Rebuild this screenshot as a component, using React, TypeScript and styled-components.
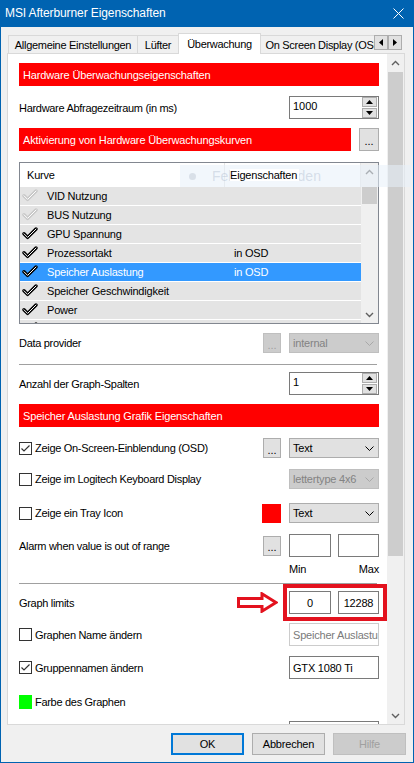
import React from "react";
import styled, { createGlobalStyle } from "styled-components";

const GlobalStyle = createGlobalStyle`
  html, body { margin: 0; padding: 0; }
  body {
    background: #f0f0f0;
    font-family: "Liberation Sans", Arial, sans-serif;
    font-size: 11px;
    color: #000;
    overflow: hidden;
  }
  #root { width: 414px; height: 763px; }
  *, *::before, *::after { box-sizing: border-box; }
`;

/* ---------- window frame ---------- */

const Window = styled.div`
  position: relative;
  width: 414px;
  height: 763px;
  display: flex;
  flex-direction: column;
  background: #f0f0f0;
  border: 1px solid #0063b1;
  border-top: 0;
  overflow: hidden;
`;

const TitleBar = styled.div`
  flex: none;
  height: 27px;
  display: flex;
  align-items: center;
  justify-content: space-between;
  padding: 0 0 1px 4px;
  background: #0063b1;
  color: #fff;
  font-size: 12px;
  letter-spacing: -0.1px;
`;

const CloseButton = styled.div`
  width: 30px;
  height: 26px;
  display: flex;
  align-items: center;
  justify-content: center;
`;

const DialogBody = styled.div`
  flex: 1;
  display: flex;
  flex-direction: column;
  padding: 6px 8px 0 6px;
`;

/* ---------- tabs ---------- */

const TabStrip = styled.div`
  flex: none;
  height: 21px;
  display: flex;
  align-items: flex-end;
  padding-left: 1px;
  box-shadow: inset 0 -1px 0 #d9d9d9;
`;

const TabRow = styled.div`
  flex: 1;
  min-width: 0;
  height: 100%;
  display: flex;
  align-items: flex-end;
  overflow: hidden;
`;

const Tab = styled.div<{ $w: number; $active?: boolean }>`
  flex: none;
  position: relative;
  z-index: ${(p) => (p.$active ? 1 : 0)};
  width: ${(p) => p.$w}px;
  height: ${(p) => (p.$active ? 21 : 18)}px;
  margin-bottom: ${(p) => (p.$active ? 0 : 1)}px;
  margin-right: -1px;
  display: flex;
  align-items: center;
  justify-content: center;
  border: 1px solid #d9d9d9;
  border-bottom: 0;
  background: ${(p) => (p.$active ? "#fff" : "#f0f0f0")};
  white-space: nowrap;
  letter-spacing: -0.3px;
`;

const TabScroller = styled.div`
  flex: none;
  align-self: flex-start;
  display: flex;
  margin: 2px 3px 0 0;
`;

const TabScrollButton = styled.div`
  width: 14px;
  height: 15px;
  display: flex;
  align-items: center;
  justify-content: center;
  background: #e1e1e1;
  border: 1px solid #adadad;
`;

/* ---------- page ---------- */

const Page = styled.div`
  flex: none;
  height: 671px;
  display: flex;
  background: #fff;
  border: 1px solid #d9d9d9;
  border-top: 0;
`;

const Scroller = styled.div`
  flex: 1;
  min-width: 0;
  overflow: hidden;
  display: flex;
  flex-direction: column;
  padding: 9px 8px 0 11px;
  & > * { flex: none; }
`;

const ScrollTrack = styled.div`
  flex: none;
  width: 17px;
  display: flex;
  flex-direction: column;
  background: #f0f0f0;
`;

const ScrollArrow = styled.div`
  flex: none;
  height: 17px;
  display: flex;
  align-items: center;
  justify-content: center;
`;

const ScrollSpace = styled.div`
  flex: 1;
  min-height: 0;
  display: flex;
  flex-direction: column;
`;

const ScrollThumb = styled.div<{ $mt: number; $h: number }>`
  flex: none;
  height: ${(p) => p.$h}px;
  margin: ${(p) => p.$mt}px 1px 0;
  background: #cdcdcd;
`;

const SectionBar = styled.div<{ $mt?: number }>`
  flex: 1 0 auto;
  height: 23px;
  margin-top: ${(p) => p.$mt ?? 0}px;
  display: flex;
  align-items: center;
  padding-left: 4px;
  background: #ff0000;
  color: #fff;
  white-space: nowrap;
  letter-spacing: -0.15px;
`;

const FormRow = styled.div<{ $mt: number; $h: number }>`
  position: relative;
  display: flex;
  align-items: center;
  gap: 8px;
  margin-top: ${(p) => p.$mt}px;
  height: ${(p) => p.$h}px;
`;

const Label = styled.div`
  flex: 1;
  min-width: 0;
  white-space: nowrap;
  letter-spacing: -0.3px;
`;

const CheckLabel = styled.div`
  flex: 1;
  min-width: 0;
  display: flex;
  align-items: center;
  gap: 3px;
  white-space: nowrap;
  letter-spacing: -0.3px;
`;

const CheckBox = styled.span`
  flex: none;
  width: 13px;
  height: 13px;
  display: inline-flex;
  align-items: center;
  justify-content: center;
  border: 1px solid #333;
  background: #fff;
`;

const Swatch = styled.span<{ $color: string; $w: number; $h: number }>`
  flex: none;
  width: ${(p) => p.$w}px;
  height: ${(p) => p.$h}px;
  background: ${(p) => p.$color};
`;

const Divider = styled.div<{ $mt: number }>`
  height: 1px;
  margin: ${(p) => p.$mt}px 2px 0 0;
  background: #a0a0a0;
`;

const DotsButton = styled.div<{ $disabled?: boolean; $w?: number; $h?: number }>`
  flex: none;
  width: ${(p) => p.$w ?? 18}px;
  height: ${(p) => p.$h ?? 20}px;
  display: flex;
  align-items: center;
  justify-content: center;
  padding-top: 3px;
  background: ${(p) => (p.$disabled ? "#cccccc" : "#e1e1e1")};
  border: 1px solid ${(p) => (p.$disabled ? "#bfbfbf" : "#adadad")};
  color: ${(p) => (p.$disabled ? "#a0a0a0" : "#000")};
`;

const Combo = styled.div<{ $disabled?: boolean }>`
  flex: none;
  width: 90px;
  height: 20px;
  display: flex;
  align-items: center;
  justify-content: space-between;
  padding: 0 4px 0 3px;
  background: ${(p) => (p.$disabled ? "#cccccc" : "#e1e1e1")};
  border: 1px solid ${(p) => (p.$disabled ? "#bfbfbf" : "#adadad")};
  color: ${(p) => (p.$disabled ? "#838383" : "#000")};
  white-space: nowrap;
  letter-spacing: -0.2px;
`;

const SpinBox = styled.div`
  flex: none;
  width: 90px;
  height: 23px;
  display: flex;
  border: 1px solid #7a7a7a;
  background: #fff;
`;

const SpinValue = styled.div`
  flex: 1;
  padding: 3px 0 0 3px;
`;

const SpinButtons = styled.div`
  flex: none;
  width: 16px;
  display: flex;
  flex-direction: column;
  gap: 1px;
  padding: 0 1px 0 0;
`;

const SpinButton = styled.div`
  flex: 1;
  display: flex;
  align-items: center;
  justify-content: center;
  background: #e1e1e1;
  border: 1px solid #adadad;
`;

const TextBox = styled.div<{ $w?: number; $center?: boolean; $disabled?: boolean }>`
  flex: none;
  width: ${(p) => p.$w ?? 90}px;
  height: 23px;
  display: flex;
  align-items: center;
  justify-content: ${(p) => (p.$center ? "center" : "flex-start")};
  padding: 0 3px;
  overflow: hidden;
  white-space: nowrap;
  background: #fff;
  border: 1px solid ${(p) => (p.$disabled ? "#cccccc" : "#7a7a7a")};
  color: ${(p) => (p.$disabled ? "#7a7a7a" : "#000")};
  letter-spacing: -0.2px;
`;

const Pair = styled.div`
  flex: none;
  display: flex;
  gap: 7px;
`;

const RangeCaption = styled.div<{ $mt: number }>`
  display: flex;
  justify-content: flex-end;
  margin-top: ${(p) => p.$mt}px;
  height: 12px;
`;

const RangeLabels = styled.div`
  width: 90px;
  display: flex;
  justify-content: space-between;
  align-items: center;
  letter-spacing: -0.2px;
`;

/* red mark-up drawn over the limits row */
const MarkFrame = styled.div`
  position: absolute;
  left: 264px;
  top: -7px;
  width: 104px;
  height: 37px;
  border: 4px solid #e3121e;
  pointer-events: none;
`;

const MarkArrow = styled.svg`
  position: absolute;
  left: 218px;
  top: 1px;
`;

/* ---------- curve list ---------- */

const ListBox = styled.div<{ $mt: number }>`
  height: 162px;
  margin-top: ${(p) => p.$mt}px;
  display: flex;
  border: 1px solid #828790;
  background: #fff;
`;

const ListBody = styled.div`
  flex: 1;
  min-width: 0;
  overflow: hidden;
  display: flex;
  flex-direction: column;
  & > * { flex: none; }
`;

const ListHeader = styled.div`
  height: 24px;
  display: grid;
  grid-template-columns: 205px 1fr;
  background: #fff;
`;

const HeaderCell = styled.div<{ $pl: number }>`
  display: flex;
  align-items: center;
  padding-left: ${(p) => p.$pl}px;
  border-right: 1px solid #e5e5e5;
  letter-spacing: -0.2px;
`;

const HeaderText = styled.span`
  position: relative;
  z-index: 2;
  background: #fff;
  padding-right: 2px;
`;

const ListRow = styled.div<{ $selected?: boolean }>`
  height: 19px;
  display: grid;
  grid-template-columns: 205px 1fr;
  align-items: center;
  border-bottom: 1px solid #fff;
  background: ${(p) => (p.$selected ? "#3399ff" : "#e4e4e4")};
  color: ${(p) => (p.$selected ? "#fff" : "#000")};
  white-space: nowrap;
  letter-spacing: -0.2px;
`;

const CurveCell = styled.div`
  display: flex;
  align-items: center;
  gap: 9px;
  padding-left: 2px;
  & > svg { margin-top: -2px; }
`;

const PropCell = styled.div`
  padding-left: 9px;
`;

/* ---------- bottom buttons ---------- */

const ButtonRow = styled.div`
  display: flex;
  justify-content: flex-end;
  gap: 8px;
  margin: 8px -1px 0 0;
`;

const DialogButton = styled.div<{ $variant?: "primary" | "disabled" }>`
  width: 73px;
  height: 22px;
  display: flex;
  align-items: center;
  justify-content: center;
  background: ${(p) => (p.$variant === "disabled" ? "#cccccc" : "#e1e1e1")};
  border: ${(p) =>
    p.$variant === "primary"
      ? "2px solid #0078d7"
      : p.$variant === "disabled"
      ? "1px solid #bfbfbf"
      : "1px solid #adadad"};
  color: ${(p) => (p.$variant === "disabled" ? "#a0a0a0" : "#000")};
  letter-spacing: -0.2px;
`;

/* faint notification toast floating over the list header */
const GhostToast = styled.div`
  position: absolute;
  left: 179px;
  top: 165px;
  width: 231px;
  height: 22px;
  z-index: 1;
  display: flex;
  align-items: center;
  gap: 16px;
  padding-left: 9px;
  background: rgba(232, 240, 250, 0.55);
  color: rgba(176, 190, 208, 0.45);
  font-size: 14px;
  white-space: nowrap;
  pointer-events: none;
`;

const GhostDot = styled.span`
  width: 7px;
  height: 7px;
  border-radius: 50%;
  background: rgba(200, 208, 218, 0.6);
`;

/* ---------- small drawings ---------- */

const Chevron = ({ dir, color = "#606060" }: { dir: "up" | "down"; color?: string }) => (
  <svg width="9" height="6" viewBox="0 0 9 6">
    <polyline
      points={dir === "up" ? "1,5 4.5,1.5 8,5" : "1,1 4.5,4.5 8,1"}
      fill="none"
      stroke={color}
      strokeWidth="1.4"
    />
  </svg>
);

const ComboArrow = ({ color = "#000" }: { color?: string }) => (
  <svg width="9" height="5" viewBox="0 0 9 5">
    <polyline points="0.5,0.5 4.5,4.5 8.5,0.5" fill="none" stroke={color} strokeWidth="1" />
  </svg>
);

const Triangle = ({ dir }: { dir: "up" | "down" | "left" | "right" }) => {
  const pts = {
    up: "0,4 3.5,0 7,4",
    down: "0,0 3.5,4 7,0",
    left: "4,0 4,7 0,3.5",
    right: "0,0 0,7 4,3.5",
  }[dir];
  const horizontal = dir === "left" || dir === "right";
  return (
    <svg width={horizontal ? 4 : 7} height={horizontal ? 7 : 4} viewBox={horizontal ? "0 0 4 7" : "0 0 7 4"}>
      <polygon points={pts} fill="#000" />
    </svg>
  );
};

const Tick = () => (
  <svg width="11" height="11" viewBox="0 0 11 11">
    <polyline points="1.5,5.5 4,8 9.5,2.5" fill="none" stroke="#333" strokeWidth="1.2" />
  </svg>
);

const CurveCheck = ({ off }: { off?: boolean }) => (
  <svg width="16" height="13" viewBox="0 0 16 13">
    <path
      d="M2 6.8 L5.6 10.4 L14 2"
      fill="none"
      stroke={off ? "#c8c8c8" : "#000"}
      strokeWidth="3.4"
      strokeLinecap="round"
      strokeLinejoin="round"
    />
    <path
      d="M2 6.8 L5.6 10.4 L14 2"
      fill="none"
      stroke="#fff"
      strokeWidth="1"
      strokeLinecap="round"
      strokeLinejoin="round"
    />
  </svg>
);

function ScrollBar({ thumbTop, thumbHeight }: { thumbTop: number; thumbHeight: number }) {
  return (
    <ScrollTrack>
      <ScrollArrow>
        <Chevron dir="up" />
      </ScrollArrow>
      <ScrollSpace>
        <ScrollThumb $mt={thumbTop} $h={thumbHeight} />
      </ScrollSpace>
      <ScrollArrow>
        <Chevron dir="down" />
      </ScrollArrow>
    </ScrollTrack>
  );
}

function Spinner({ value }: { value: string }) {
  return (
    <SpinBox>
      <SpinValue>{value}</SpinValue>
      <SpinButtons>
        <SpinButton>
          <Triangle dir="up" />
        </SpinButton>
        <SpinButton>
          <Triangle dir="down" />
        </SpinButton>
      </SpinButtons>
    </SpinBox>
  );
}

type Curve = { name: string; prop?: string; off?: boolean; selected?: boolean };

const curves: Curve[] = [
  { name: "VID Nutzung", off: true },
  { name: "BUS Nutzung", off: true },
  { name: "GPU Spannung" },
  { name: "Prozessortakt", prop: "in OSD" },
  { name: "Speicher Auslastung", prop: "in OSD", selected: true },
  { name: "Speicher Geschwindigkeit" },
  { name: "Power" },
  { name: "Lüftergeschwindigkeit" },
];

export default function App() {
  return (
    <>
      <GlobalStyle />
      <Window>
        <TitleBar>
          <span>MSI Afterburner Eigenschaften</span>
          <CloseButton>
            <svg width="11" height="11" viewBox="0 0 11 11">
              <path d="M0.5 0.5 L10.5 10.5 M10.5 0.5 L0.5 10.5" stroke="#fff" strokeWidth="1" />
            </svg>
          </CloseButton>
        </TitleBar>

        <DialogBody>
          <TabStrip>
            <TabRow>
              <Tab $w={130}>Allgemeine Einstellungen</Tab>
              <Tab $w={42}>Lüfter</Tab>
              <Tab $w={83} $active>
                Überwachung
              </Tab>
              <Tab $w={130}>On Screen Display (OSD)</Tab>
            </TabRow>
            <TabScroller>
              <TabScrollButton>
                <Triangle dir="left" />
              </TabScrollButton>
              <TabScrollButton>
                <Triangle dir="right" />
              </TabScrollButton>
            </TabScroller>
          </TabStrip>

          <Page>
            <Scroller>
              <SectionBar>Hardware Überwachungseigenschaften</SectionBar>

              <FormRow $mt={10} $h={23}>
                <Label>Hardware Abfragezeitraum (in ms)</Label>
                <Spinner value="1000" />
              </FormRow>

              <FormRow $mt={9} $h={23}>
                <SectionBar>Aktivierung von Hardware Überwachungskurven</SectionBar>
                <DotsButton $w={20} $h={23}>...</DotsButton>
              </FormRow>

              <ListBox $mt={11}>
                <ListBody>
                  <ListHeader>
                    <HeaderCell $pl={7}>Kurve</HeaderCell>
                    <HeaderCell $pl={5}>
                      <HeaderText>Eigenschaften</HeaderText>
                    </HeaderCell>
                  </ListHeader>
                  {curves.map((c) => (
                    <ListRow key={c.name} $selected={c.selected}>
                      <CurveCell>
                        <CurveCheck off={c.off} />
                        <span>{c.name}</span>
                      </CurveCell>
                      <PropCell>{c.prop ?? ""}</PropCell>
                    </ListRow>
                  ))}
                </ListBody>
                <ScrollBar thumbTop={7} thumbHeight={17} />
              </ListBox>

              <FormRow $mt={9} $h={20}>
                <Label>Data provider</Label>
                <DotsButton $disabled>...</DotsButton>
                <Combo $disabled>
                  <span>internal</span>
                  <ComboArrow color="#a8a8a8" />
                </Combo>
              </FormRow>

              <Divider $mt={11} />

              <FormRow $mt={7} $h={23}>
                <Label>Anzahl der Graph-Spalten</Label>
                <Spinner value="1" />
              </FormRow>

              <SectionBar $mt={9}>Speicher Auslastung Grafik Eigenschaften</SectionBar>

              <FormRow $mt={11} $h={20}>
                <CheckLabel>
                  <CheckBox>
                    <Tick />
                  </CheckBox>
                  Zeige On-Screen-Einblendung (OSD)
                </CheckLabel>
                <DotsButton>...</DotsButton>
                <Combo>
                  <span>Text</span>
                  <ComboArrow />
                </Combo>
              </FormRow>

              <FormRow $mt={11} $h={20}>
                <CheckLabel>
                  <CheckBox />
                  Zeige im Logitech Keyboard Display
                </CheckLabel>
                <Combo $disabled>
                  <span>lettertype 4x6</span>
                  <ComboArrow color="#a8a8a8" />
                </Combo>
              </FormRow>

              <FormRow $mt={14} $h={20}>
                <CheckLabel>
                  <CheckBox />
                  Zeige ein Tray Icon
                </CheckLabel>
                <Swatch $color="#ff0000" $w={19} $h={19} />
                <Combo>
                  <span>Text</span>
                  <ComboArrow />
                </Combo>
              </FormRow>

              <FormRow $mt={11} $h={23}>
                <Label>Alarm when value is out of range</Label>
                <DotsButton>...</DotsButton>
                <Pair>
                  <TextBox $w={42} />
                  <TextBox $w={41} />
                </Pair>
              </FormRow>

              <RangeCaption $mt={6}>
                <RangeLabels>
                  <span>Min</span>
                  <span>Max</span>
                </RangeLabels>
              </RangeCaption>

              <Divider $mt={8} />

              <FormRow $mt={7} $h={23}>
                <Label>Graph limits</Label>
                <Pair>
                  <TextBox $w={42} $center>
                    0
                  </TextBox>
                  <TextBox $w={41} $center>
                    12288
                  </TextBox>
                </Pair>
                <MarkArrow width="41" height="21" viewBox="0 0 41 21">
                  <path
                    d="M1.5 6.5 H25 V1.8 L39 10.5 L25 19.2 V14.5 H1.5 Z"
                    fill="#fff"
                    stroke="#e3121e"
                    strokeWidth="3"
                    strokeLinejoin="miter"
                  />
                </MarkArrow>
                <MarkFrame />
              </FormRow>

              <FormRow $mt={9} $h={23}>
                <CheckLabel>
                  <CheckBox />
                  Graphen Name ändern
                </CheckLabel>
                <TextBox $disabled>Speicher Auslastung</TextBox>
              </FormRow>

              <FormRow $mt={10} $h={23}>
                <CheckLabel>
                  <CheckBox>
                    <Tick />
                  </CheckBox>
                  Gruppennamen ändern
                </CheckLabel>
                <TextBox>GTX 1080 Ti</TextBox>
              </FormRow>

              <FormRow $mt={13} $h={19}>
                <CheckLabel>
                  <Swatch $color="#00ff00" $w={13} $h={14} />
                  Farbe des Graphen
                </CheckLabel>
              </FormRow>

              <FormRow $mt={10} $h={23}>
                <Label />
                <TextBox />
              </FormRow>
            </Scroller>
            <ScrollBar thumbTop={1} thumbHeight={484} />
          </Page>

          <ButtonRow>
            <DialogButton $variant="primary">OK</DialogButton>
            <DialogButton>Abbrechen</DialogButton>
            <DialogButton $variant="disabled">Hilfe</DialogButton>
          </ButtonRow>
        </DialogBody>

        <GhostToast>
          <GhostDot />
          <span>Fehler vermeiden</span>
        </GhostToast>
      </Window>
    </>
  );
}
